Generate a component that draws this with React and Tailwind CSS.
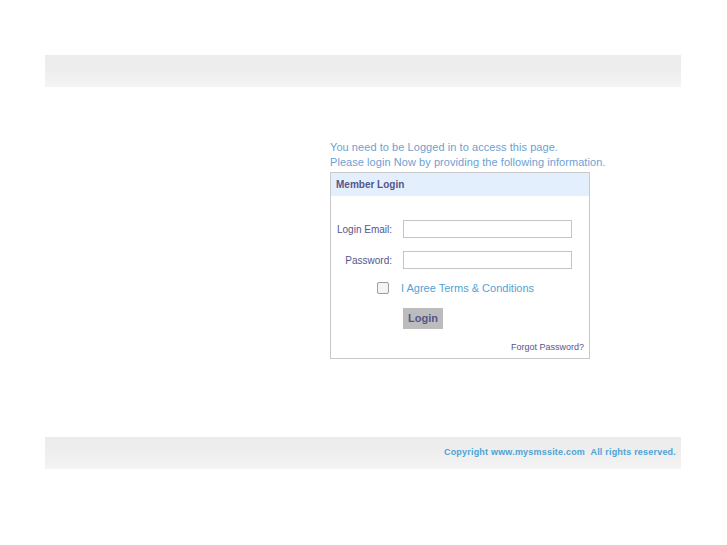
//Imports

//LoginPage
const App = () => {
  return (
    <div
      className="min-h-[545px] w-full bg-white"
      style={{ fontFamily: '"Liberation Sans", Arial, sans-serif' }}
    >
      <div className="ml-[45px] w-[636px] pt-[55px]">
        {/* Header bar */}
        <div className="h-[32px] w-full bg-gradient-to-b from-[#ececec] via-[#eeeeee] to-[#f4f4f4]" />

        {/* Content */}
        <div className="flex pt-[53px] h-[350px]">
          <div className="w-[285px] shrink-0" />
          <div className="flex flex-col">
            <p className="text-[11px] leading-[15px] tracking-[0.06px] text-[#6e9fd0]">
              You need to be Logged in to access this page.
            </p>
            <p className="text-[11px] leading-[15px] tracking-[0.06px] text-[#6e9fd0]">
              Please login Now by providing the following information.
            </p>

            <div className="mt-[2px] w-[260px] border border-[#c9c9c9] bg-white">
              <div className="flex h-[23px] items-center bg-[#e4effd] px-[5px]">
                <span className="text-[10px] font-bold text-[#55558a]">
                  Member Login
                </span>
              </div>

              <form className="flex flex-col pt-[24px] pb-[4px]">
                <div className="flex items-center">
                  <label className="w-[61px] text-right text-[10px] text-[#55558a]">
                    Login Email:
                  </label>
                  <input
                    type="text"
                    className="ml-[11px] h-[18px] w-[169px] border border-[#c4c4c4] bg-white outline-none"
                  />
                </div>
                <div className="mt-[13px] flex items-center">
                  <label className="w-[61px] text-right text-[10px] text-[#55558a]">
                    Password:
                  </label>
                  <input
                    type="password"
                    className="ml-[11px] h-[18px] w-[169px] border border-[#c4c4c4] bg-white outline-none"
                  />
                </div>
                <div className="mt-[11px] flex items-center">
                  <span className="ml-[46px] h-[12px] w-[12px] rounded-[2px] border border-[#9c9c9c] bg-[#f4f4f4]" />
                  <span className="ml-[12px] text-[11px] text-[#4fa3d6]">
                    I Agree Terms &amp; Conditions
                  </span>
                </div>
                <div className="mt-[11px] flex">
                  <button
                    type="button"
                    className="ml-[72px] h-[21px] w-[40px] bg-[#bcbcbc] text-[11px] font-bold text-[#55558a]"
                  >
                    Login
                  </button>
                </div>
                <div className="mt-[12px] flex justify-end pr-[5px]">
                  <span className="text-[9px] text-[#55558a]">
                    Forgot Password?
                  </span>
                </div>
              </form>
            </div>
          </div>
        </div>

        {/* Footer bar */}
        <div className="flex h-[32px] w-full items-center justify-end bg-gradient-to-b from-[#ececec] via-[#eeeeee] to-[#f4f4f4] pr-[5px]">
          <span className="text-[9px] font-bold tracking-[0.2px] text-[#4fa3d6]">
            Copyright www.mysmssite.com&nbsp;&nbsp;All rights reserved.
          </span>
        </div>
      </div>
    </div>
  );
};

export default App;
